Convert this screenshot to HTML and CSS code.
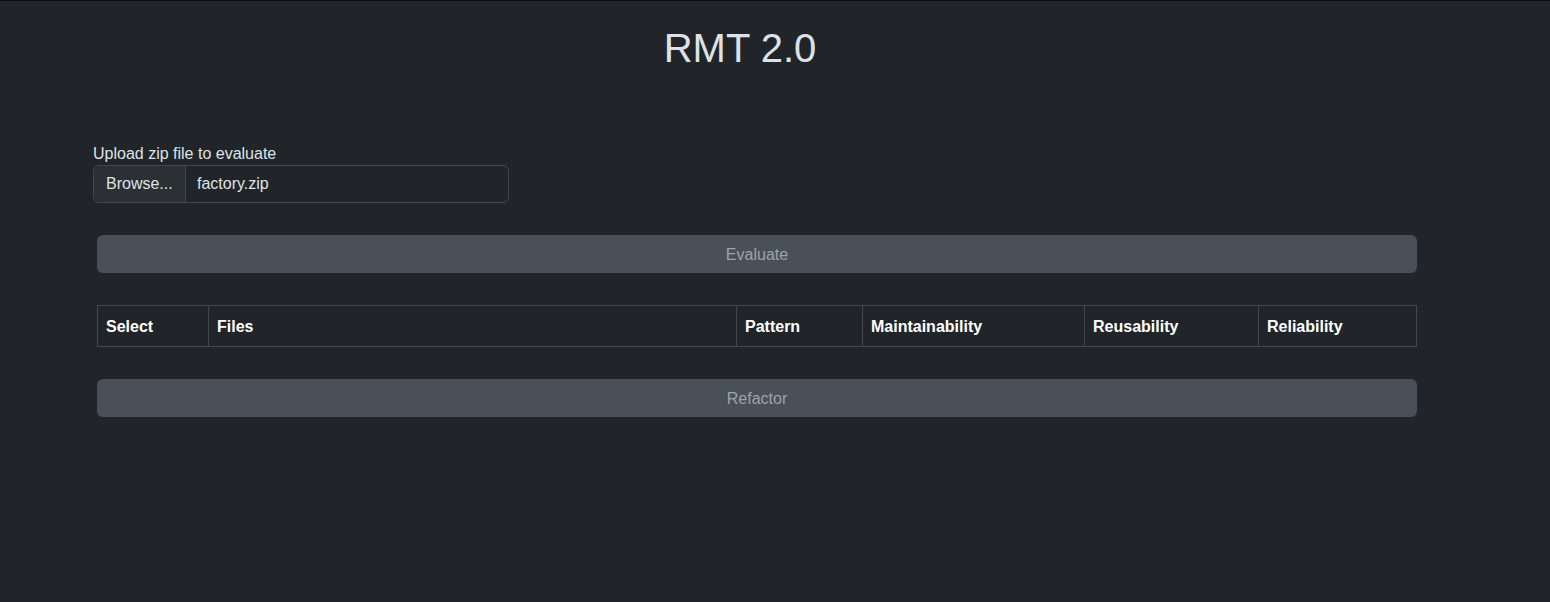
FILE: index.html
```html
<!DOCTYPE html>
<html lang="en">
<head>
<meta charset="utf-8">
<title>RMT 2.0</title>
<link rel="stylesheet" href="styles.css">
</head>
<body>
<div class="page">
  <header class="header">
    <h1 class="title">RMT 2.0</h1>
  </header>
  <section class="upload">
    <label class="upload-label">Upload zip file to evaluate</label>
    <div class="input-group">
      <span class="browse">Browse...</span>
      <span class="file-name">factory.zip</span>
    </div>
  </section>
  <section class="content">
    <button class="btn" disabled>Evaluate</button>
    <table class="results">
      <thead>
        <tr>
          <th class="c-select">Select</th>
          <th class="c-files">Files</th>
          <th class="c-pattern">Pattern</th>
          <th class="c-maint">Maintainability</th>
          <th class="c-reuse">Reusability</th>
          <th class="c-rel">Reliability</th>
        </tr>
      </thead>
    </table>
    <button class="btn" disabled>Refactor</button>
  </section>
</div>
</body>
</html>
```
FILE: styles.css
```css
html, body {
  margin: 0;
  padding: 0;
  background: #212529;
}
body {
  font-family: "Liberation Sans", Arial, sans-serif;
  color: #dee2e6;
  font-size: 16px;
  line-height: 1.5;
  border-top: 1px solid #0d0e10;
  min-height: 601px;
}
.page {
  display: flex;
  flex-direction: column;
}
.header {
  width: 1480px;
  display: flex;
  justify-content: center;
  padding-top: 23px;
}
.title {
  margin: 0;
  font-size: 40px;
  font-weight: 500;
  line-height: 48px;
  color: #dee2e6;
}
.upload {
  margin-top: 70px;
  padding-left: 93px;
  display: flex;
  flex-direction: column;
}
.upload-label {
  font-size: 16px;
  line-height: 23px;
  color: #dee2e6;
}
.input-group {
  display: flex;
  width: 414px;
  height: 36px;
  border: 1px solid #43484e;
  border-radius: 6px;
  overflow: hidden;
  background: #212529;
}
.browse {
  display: flex;
  align-items: center;
  padding: 0 12px;
  background: #2b3035;
  border-right: 1px solid #43484e;
  width: 67px;
}
.file-name {
  display: flex;
  align-items: center;
  padding: 0 11px;
}
.content {
  margin: 32px 0 0 97px;
  width: 1320px;
  display: flex;
  flex-direction: column;
  gap: 32px;
}
.btn {
  height: 38px;
  width: 100%;
  border: none;
  border-radius: 6px;
  background: #495057;
  color: #9ea3a8;
  font-family: inherit;
  font-size: 16px;
  padding: 2px 0 0;
}
.results {
  width: 1320px;
  border-collapse: collapse;
  table-layout: fixed;
}
.results th {
  border: 1px solid #43484e;
  padding: 9px 8px 7px;
  text-align: left;
  font-weight: 700;
  color: #ffffff;
  line-height: 24px;
  font-size: 16px;
}
.c-select { width: 94px; }
.c-files { width: 511px; }
.c-pattern { width: 109px; }
.c-maint { width: 205px; }
.c-reuse { width: 157px; }
```
